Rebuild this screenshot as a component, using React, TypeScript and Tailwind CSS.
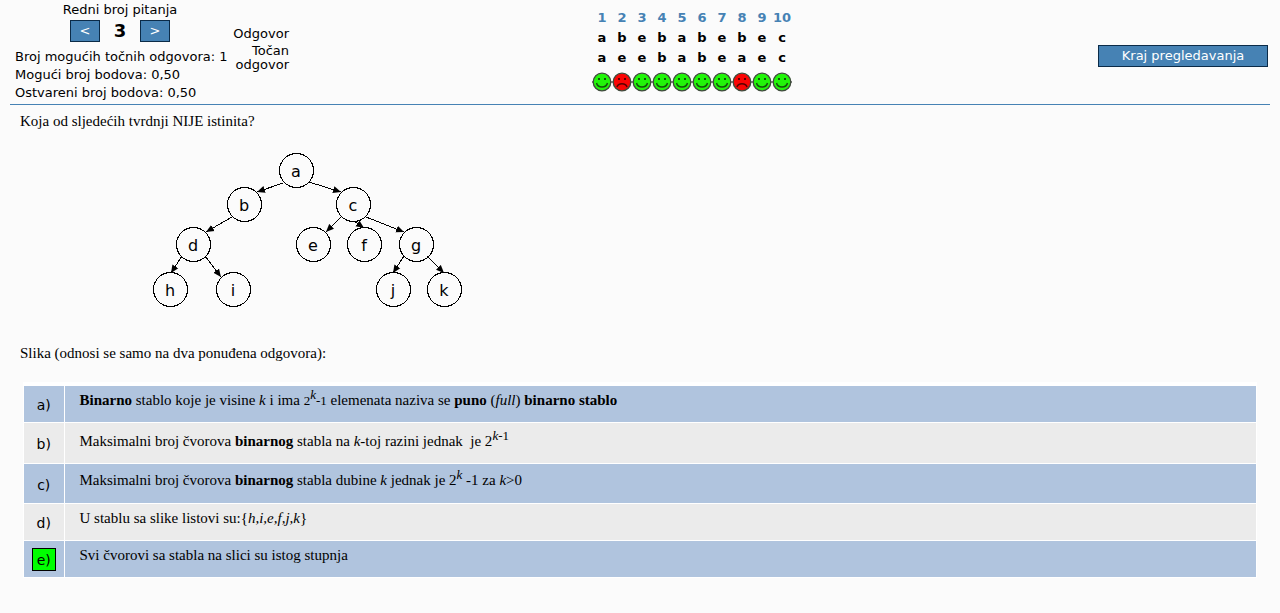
import type { ReactNode } from "react";

const sans = "font-['DejaVu_Sans',sans-serif]";
const serif = "font-['Liberation_Serif',serif]";

type Result = { given: string; correct: string };

const results: Result[] = [
  { given: "a", correct: "a" },
  { given: "b", correct: "e" },
  { given: "e", correct: "e" },
  { given: "b", correct: "b" },
  { given: "a", correct: "a" },
  { given: "b", correct: "b" },
  { given: "e", correct: "e" },
  { given: "b", correct: "a" },
  { given: "e", correct: "e" },
  { given: "c", correct: "c" },
];

function Face({ happy }: { happy: boolean }) {
  const ink = happy ? "#14520c" : "#5c0000";
  return (
    <svg
      viewBox="0 0 20 20"
      className="mx-auto block h-5 w-5"
      role="img"
      aria-label={happy ? "Točno" : "Netočno"}
    >
      <path d="M0 10h20" stroke="#8a8a8a" strokeWidth="2" />
      <circle cx="10" cy="10" r="8.8" fill={happy ? "#22f50a" : "#fa0505"} stroke="#3f4a3c" strokeWidth="1.3" />
      <rect x="6" y="6" width="2" height="2" fill={ink} />
      <rect x="12" y="6" width="2" height="2" fill={ink} />
      {happy ? (
        <path d="M4.5 11Q5.5 15 10 15T15.5 11" fill="none" stroke={ink} strokeWidth="1.5" />
      ) : (
        <path d="M5 15Q6 11.8 10 11.8T15 15" fill="none" stroke={ink} strokeWidth="1.5" />
      )}
    </svg>
  );
}

const nodes: [string, number, number][] = [
  ["a", 156, 30],
  ["b", 104, 64],
  ["c", 213, 64],
  ["d", 53, 104],
  ["e", 173, 104],
  ["f", 224, 104],
  ["g", 276, 104],
  ["h", 30, 149],
  ["i", 93, 149],
  ["j", 253, 149],
  ["k", 304, 149],
];

const edges: [number, number, number, number][] = [
  [143, 43, 117, 52],
  [169, 42, 201, 52],
  [92, 77, 66, 92],
  [201, 77, 186, 92],
  [214, 81, 224, 88],
  [226, 77, 264, 92],
  [42, 116, 31, 133],
  [65, 116, 81, 137],
  [264, 116, 253, 133],
  [287, 116, 304, 133],
];

function Tree() {
  return (
    <svg viewBox="0 0 340 175" className="block h-[175px] w-[340px]" role="img" aria-label="Binarno stablo">
      <defs>
        <marker id="tip" viewBox="0 0 8 8" refX="8" refY="4" markerWidth="8" markerHeight="8" markerUnits="userSpaceOnUse" orient="auto">
          <path d="M0 0.5L8 4L0 7.5Z" fill="#000" stroke="none" />
        </marker>
      </defs>
      <g stroke="#000" fill="none" shapeRendering="crispEdges">
        {edges.map(([x1, y1, x2, y2]) => (
          <line key={`${x1}-${y1}-${x2}`} x1={x1} y1={y1} x2={x2} y2={y2} markerEnd="url(#tip)" />
        ))}
        {nodes.map(([name, x, y]) => (
          <circle key={name} cx={x + 0.5} cy={y + 0.5} r="17" />
        ))}
      </g>
      <g className={`${sans} text-base`} textAnchor="middle">
        {nodes.map(([name, x, y]) => (
          <text key={name} x={x} y={y + 7}>
            {name}
          </text>
        ))}
      </g>
    </svg>
  );
}

function Power({ children }: { children: ReactNode }) {
  return <sup className="text-[13px]">{children}</sup>;
}

const answers: { key: string; height: string; correct?: boolean; body: ReactNode }[] = [
  {
    key: "a",
    height: "h-9 pt-1",
    body: (
      <>
        <b>Binarno</b> stablo koje je visine <i>k</i> i ima{" "}
        <span className="text-[13px]">
          2<Power><i>k</i></Power>-1
        </span>{" "}
        elemenata naziva se <b>puno</b> (<i>full</i>) <b>binarno stablo</b>
      </>
    ),
  },
  {
    key: "b",
    height: "h-10 pt-2",
    body: (
      <>
        Maksimalni broj čvorova <b>binarnog</b> stabla na <i>k</i>-toj razini jednak&nbsp; je 2
        <Power><i>k</i>-1</Power>
      </>
    ),
  },
  {
    key: "c",
    height: "h-[39px] pt-[6px]",
    body: (
      <>
        Maksimalni broj čvorova <b>binarnog</b> stabla dubine <i>k</i> jednak je 2<Power><i>k</i></Power> -1 za <i>k</i>&gt;0
      </>
    ),
  },
  {
    key: "d",
    height: "h-9 pt-1",
    body: (
      <>
        U stablu sa slike listovi su:{"{"}
        <i>h,i,e,f,j,k</i>
        {"}"}
      </>
    ),
  },
  { key: "e", height: "h-9 pt-1", correct: true, body: <>Svi čvorovi sa stabla na slici su istog stupnja</> },
];

const button = "border border-[#0b2b48] bg-[#4682b4] text-center text-white";

export default function App() {
  return (
    <div className={`min-h-screen bg-[#fbfbfb] px-[10px] text-black ${sans} text-[13px]`}>
      <header className="flex h-[105px] border-b border-[#4682b4]">
        <div className="w-[215px] pl-[5px] pt-px">
          <div className="text-center leading-[18px]">Redni broj pitanja</div>
          <div className="flex items-center justify-center pt-px">
            <button type="button" className={`${button} h-[22px] w-[30px]`}>&lt;</button>
            <span className="w-10 text-center text-lg leading-[22px] font-bold">3</span>
            <button type="button" className={`${button} h-[22px] w-[30px]`}>&gt;</button>
          </div>
          <div className="pt-[6px] leading-[18px] whitespace-nowrap">
            <p>Broj mogućih točnih odgovora: 1</p>
            <p>Mogući broj bodova: 0,50</p>
            <p>Ostvareni broj bodova: 0,50</p>
          </div>
        </div>
        <div className="w-16 pt-[27px] text-right leading-[14px]">
          <p>Odgovor</p>
          <p className="pt-[3px]">Točan odgovor</p>
        </div>
        <div className="flex flex-1 items-start justify-center pt-2 pr-[3px]">
          <table className="border-collapse text-center text-[13px] leading-5 font-bold">
            <thead>
              <tr className="text-[#4682b4]">
                {results.map((_, i) => (
                  <th key={i} className="min-w-5 p-0">{i + 1}</th>
                ))}
              </tr>
            </thead>
            <tbody>
              <tr>
                {results.map((r, i) => (
                  <td key={i} className="p-0">{r.given}</td>
                ))}
              </tr>
              <tr>
                {results.map((r, i) => (
                  <td key={i} className="p-0">{r.correct}</td>
                ))}
              </tr>
              <tr>
                {results.map((r, i) => (
                  <td key={i} className="p-0 pt-1">
                    <Face happy={r.given === r.correct} />
                  </td>
                ))}
              </tr>
            </tbody>
          </table>
        </div>
        <div className="pt-[45px] pr-[2px]">
          <button type="button" className={`${button} h-[22px] w-[170px]`}>Kraj pregledavanja</button>
        </div>
      </header>

      <main className={`${serif} text-[15px] leading-5`}>
        <p className="px-[10px] pt-[6px]">Koja od sljedećih tvrdnji NIJE istinita?</p>
        <div className="pt-[9px] pl-[130px]">
          <Tree />
        </div>
        <p className="px-[10px] pt-7">Slika (odnosi se samo na dva ponuđena odgovora):</p>
        <div className="mx-[13px] mt-[19px] border-x border-t-4 border-white bg-white">
          <table className="w-full border-collapse">
            <tbody>
              {answers.map((a, i) => (
                <tr key={a.key} className={`border-b border-white ${i % 2 ? "bg-[#ebebeb]" : "bg-[#b0c4de]"}`}>
                  <td className={`w-10 border-r border-white p-0 text-center ${sans} text-sm`}>
                    {a.correct ? (
                      <span className="mx-auto block h-[23px] w-6 border border-black bg-[#00ff00] leading-[22px]">{a.key})</span>
                    ) : (
                      <span className="block pt-[2px]">{a.key})</span>
                    )}
                  </td>
                  <td className="p-0 pl-[15px]">
                    <div className={a.height}>{a.body}</div>
                  </td>
                </tr>
              ))}
            </tbody>
          </table>
        </div>
      </main>
    </div>
  );
}
